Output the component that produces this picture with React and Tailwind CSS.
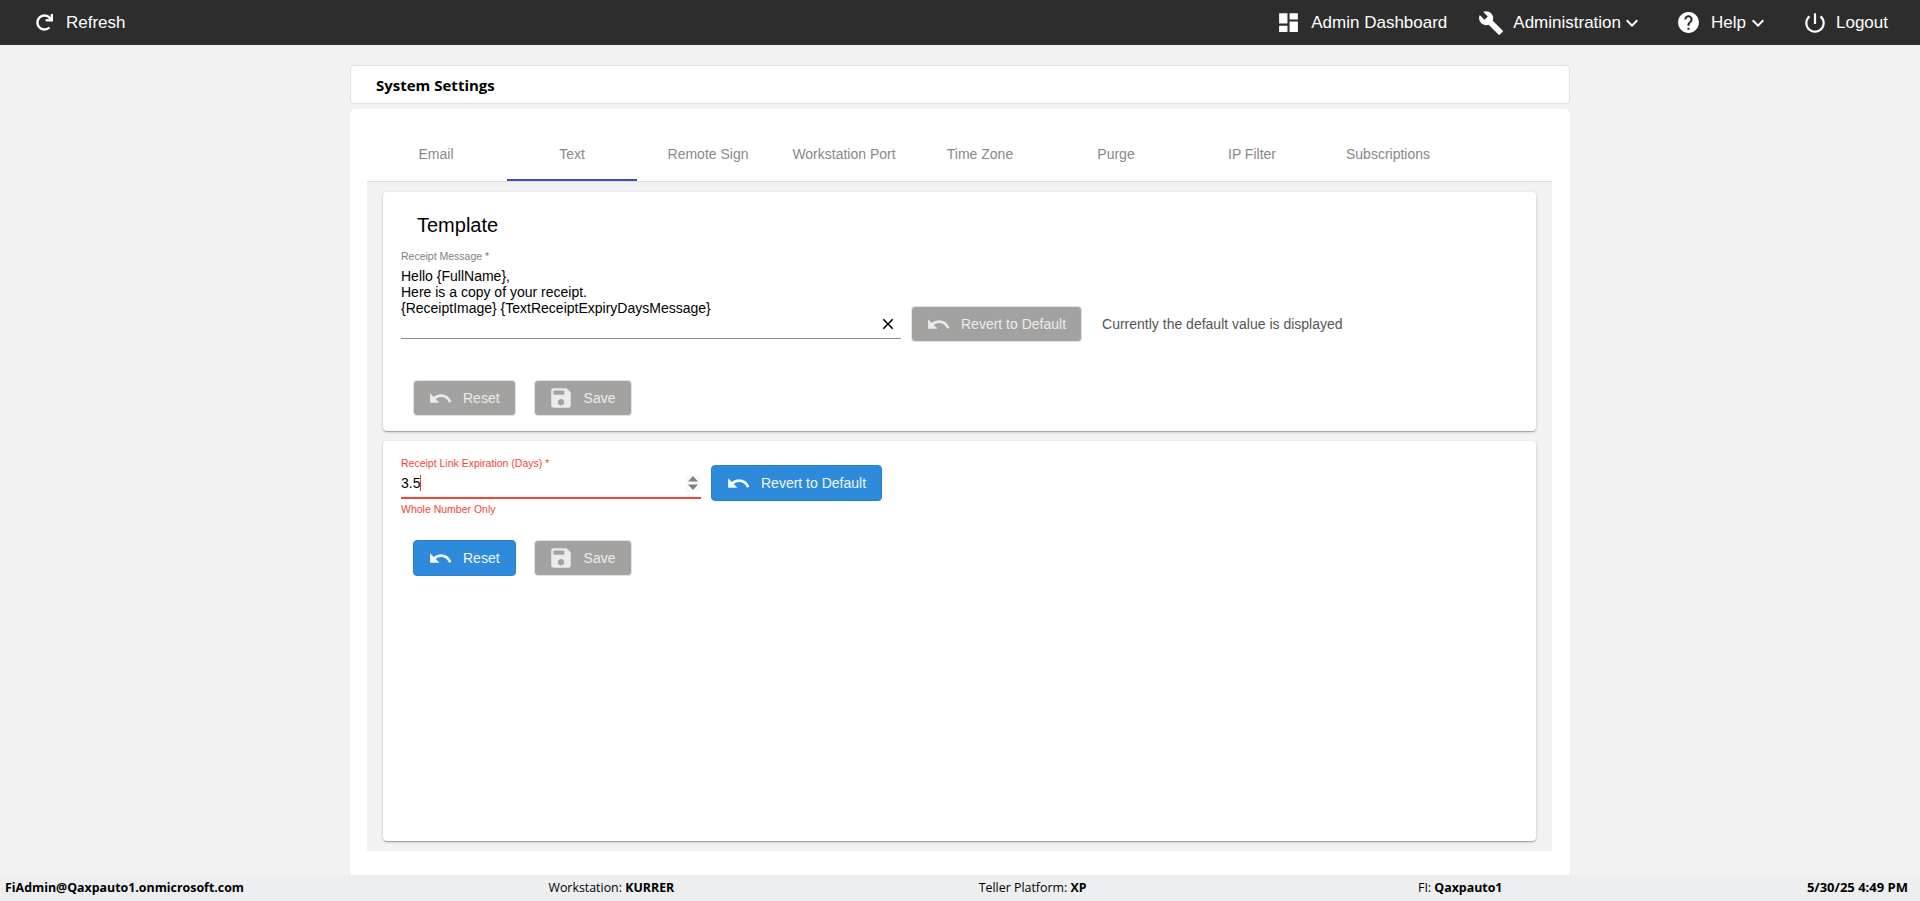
import React from "react";
import { FaRedo } from "react-icons/fa";

const Ic = ({ d, size = 24, className = "" }) => (
  <svg viewBox="0 0 24 24" width={size} height={size} fill="currentColor" className={"shrink-0 " + className}>
    <path d={d} />
  </svg>
);
const P = {
  undo: "M12.5 8c-2.65 0-5.05.99-6.9 2.6L2 7v9h9l-3.62-3.62c1.39-1.16 3.16-1.88 5.12-1.88 3.54 0 6.55 2.31 7.6 5.5l2.37-.78C21.08 11.03 17.15 8 12.5 8z",
  save: "M17 3H5c-1.11 0-2 .9-2 2v14c0 1.1.89 2 2 2h14c1.1 0 2-.9 2-2V7l-4-4zm-5 16c-1.66 0-3-1.34-3-3s1.34-3 3-3 3 1.34 3 3-1.34 3-3 3zm3-10H5V5h10v4z",
  dash: "M3 13h8V3H3v10zm0 8h8v-6H3v6zm10 0h8V11h-8v10zm0-18v6h8V3h-8z",
  build: "M22.7 19l-9.1-9.1c.9-2.3.4-5-1.5-6.9-2-2-5-2.4-7.4-1.3L9 6 6 9 1.6 4.7C.4 7.1.9 10.1 2.9 12.1c1.9 1.9 4.6 2.4 6.9 1.5l9.1 9.1c.4.4 1 .4 1.4 0l2.3-2.3c.5-.4.5-1.1.1-1.4z",
  help: "M12 2C6.48 2 2 6.48 2 12s4.48 10 10 10 10-4.48 10-10S17.52 2 12 2zm1 17h-2v-2h2v2zm2.07-7.75l-.9.92C13.45 12.9 13 13.5 13 15h-2v-.5c0-1.1.45-2.1 1.17-2.83l1.24-1.26c.37-.36.59-.86.59-1.41 0-1.1-.9-2-2-2s-2 .9-2 2H8c0-2.21 1.79-4 4-4s4 1.79 4 4c0 .88-.36 1.68-.93 2.25z",
  power: "M13 3h-2v10h2V3zm4.83 2.17l-1.42 1.42C17.99 7.86 19 9.81 19 12c0 3.87-3.13 7-7 7s-7-3.13-7-7c0-2.19 1.01-4.14 2.58-5.42L6.17 5.17C4.23 6.82 3 9.26 3 12c0 4.97 4.03 9 9 9s9-4.03 9-9c0-2.74-1.23-5.18-3.17-6.83z",
  more: "M16.59 8.59L12 13.17 7.41 8.59 6 10l6 6 6-6z",
  close: "M19 6.41L17.59 5 12 10.59 6.41 5 5 6.41 10.59 12 5 17.59 6.41 19 12 13.41 17.59 19 19 17.59 13.41 12 19 6.41z",
};

const Btn = ({ icon, children, active, className = "" }) => (
  <button
    className={
      "h-9 flex items-center gap-[10px] pl-[14px] pr-[15px] border rounded-[4px] text-[14px] shrink-0 " +
      (active
        ? "bg-[#2e8bdc] border-[#2a80cc] text-[#f2f7fc] "
        : "bg-[#a3a2a0] border-[#e4e4e4] text-[#ebebeb] ") +
      className
    }
  >
    {icon === P.undo ? <Ic d={icon} size={25} /> : <Ic d={icon} size={26} className="-ml-[1px]" />}
    <span>{children}</span>
  </button>
);

const tabs = ["Email", "Text", "Remote Sign", "Workstation Port", "Time Zone", "Purge", "IP Filter", "Subscriptions"];
const cardCls =
  "bg-white rounded-[4px] shadow-[0_1px_3px_rgba(0,0,0,0.2),0_1px_1px_rgba(0,0,0,0.14),0_2px_1px_-1px_rgba(0,0,0,0.12)]";

const Foot = ({ label, value, className = "" }) => (
  <span className={"whitespace-nowrap " + className}>
    {label}: <b className="font-bold">{value}</b>
  </span>
);

export default function App() {
  return (
    <div className="h-[901px] flex flex-col overflow-hidden bg-[#f2f2f2] font-['Liberation_Sans',Arial,sans-serif]">
      <header className="h-[45px] shrink-0 bg-[#2d2d2d] text-white text-[17px] flex items-center justify-between pl-[36px] pr-[32px]">
        <div className="flex items-center gap-[13px]">
          <FaRedo size={17} />
          <span>Refresh</span>
        </div>
        <div className="flex items-center">
          <div className="flex items-center gap-[10px]">
            <Ic d={P.dash} size={25} />
            <span>Admin Dashboard</span>
          </div>
          <div className="flex items-center gap-[9px] ml-[31px]">
            <Ic d={P.build} size={26} />
            <span>Administration</span>
            <Ic d={P.more} size={24} className="-ml-[10px]" />
          </div>
          <div className="flex items-center gap-[10px] ml-[32px]">
            <Ic d={P.help} size={25} />
            <span>Help</span>
            <Ic d={P.more} size={24} className="-ml-[10px]" />
          </div>
          <div className="flex items-center gap-[8px] ml-[32px]">
            <Ic d={P.power} size={26} />
            <span>Logout</span>
          </div>
        </div>
      </header>

      <main className="flex-1 min-h-0 overflow-hidden">
        <div className="w-[1222px] ml-[349px] mt-[20px] flex flex-col h-full">
          <div className="mx-[1px] h-[39px] shrink-0 bg-white border border-[#e0e0e0] rounded-[4px] flex items-center pl-[25px] pt-[1px] text-[15px] font-bold text-black font-['Open_Sans',sans-serif]">
            System Settings
          </div>
          <div className="mt-[5px] flex-1 bg-white rounded-t-[6px] border-x border-[#ececec] pt-[16px] pl-[17px] pr-[18px]">
            <div className="h-[57px] flex gap-[6px] pl-[4px] border-b border-[#dedede]">
              {tabs.map((t, i) => (
                <div
                  key={t}
                  className={
                    "w-[130px] h-[56px] pt-[5px] border-b-2 flex items-center justify-center text-[14px] text-[#888888] whitespace-nowrap " +
                    (i === 1 ? "border-[#3f51b5]" : "border-transparent")
                  }
                >
                  {t}
                </div>
              ))}
            </div>
            <div className="bg-[#f2f2f2] px-[16px] py-[10px] flex flex-col gap-[10px] h-[669px]">
              <section className={cardCls + " h-[239px] pl-[18px] pt-[17px]"}>
                <h2 className="pl-[16px] h-[32px] flex items-center text-[20px] text-black">Template</h2>
                <div className="flex items-start mt-[9px]">
                  <div className="w-[500px] h-[89px] relative border-b border-[#8a8a8a]">
                    <div className="text-[10.5px] leading-[13px] text-[#808080]">Receipt Message *</div>
                    <div className="mt-[5px] text-[14px] leading-[16px] text-black">
                      <div>Hello {"{FullName}"},</div>
                      <div>Here is a copy of your receipt.</div>
                      <div>{"{ReceiptImage} {TextReceiptExpiryDaysMessage}"}</div>
                    </div>
                    <Ic d={P.close} size={18} className="absolute right-[4px] top-[65px] text-black" />
                  </div>
                  <Btn icon={P.undo} className="ml-[10px] mt-[56px]">Revert to Default</Btn>
                  <div className="ml-[20px] mt-[56px] h-9 flex items-center text-[14px] text-[#555555]">
                    Currently the default value is displayed
                  </div>
                </div>
                <div className="flex gap-[18px] ml-[12px] mt-[38px]">
                  <Btn icon={P.undo}>Reset</Btn>
                  <Btn icon={P.save}>Save</Btn>
                </div>
              </section>

              <section className={cardCls + " h-[400px] pl-[18px] pt-[16px]"}>
                <div className="flex items-start">
                  <div className="w-[300px]">
                    <div className="text-[10.5px] leading-[13px] text-[#f44336]">Receipt Link Expiration (Days) *</div>
                    <div className="mt-[5px] h-[22px] flex items-start justify-between pr-[1px] text-[14px] leading-[16px] text-black">
                      <span className="flex items-center">
                        3.5<span className="inline-block w-[1px] h-[16px] bg-[#e53935]"></span>
                      </span>
                      <svg width="14" height="16" viewBox="0 0 14 16" className="bg-[#f8f8f8]">
                        <path d="M7 1l5 5.5H2z M2 9.5h10l-5 5.5z" fill="#808080" />
                      </svg>
                    </div>
                    <div className="h-[2px] bg-[#f44336]"></div>
                    <div className="mt-[4px] text-[10.5px] leading-[13px] text-[#f44336]">Whole Number Only</div>
                  </div>
                  <Btn icon={P.undo} active className="ml-[10px] mt-[8px]">Revert to Default</Btn>
                </div>
                <div className="flex gap-[18px] ml-[12px] mt-[24px]">
                  <Btn icon={P.undo} active>Reset</Btn>
                  <Btn icon={P.save}>Save</Btn>
                </div>
              </section>
            </div>
          </div>
        </div>
      </main>

      <footer className="h-[26px] shrink-0 bg-[#edeef0] flex items-center justify-between pl-[5px] pr-[12px] text-[12.4px] text-black font-['Open_Sans',sans-serif]">
        <b className="font-bold whitespace-nowrap">FiAdmin@Qaxpauto1.onmicrosoft.com</b>
        <Foot label="Workstation" value="KURRER" />
        <Foot label="Teller Platform" value="XP" />
        <Foot label="FI" value="Qaxpauto1" className="ml-[27px]" />
        <b className="font-bold whitespace-nowrap text-[13px]">5/30/25 4:49 PM</b>
      </footer>
    </div>
  );
}
